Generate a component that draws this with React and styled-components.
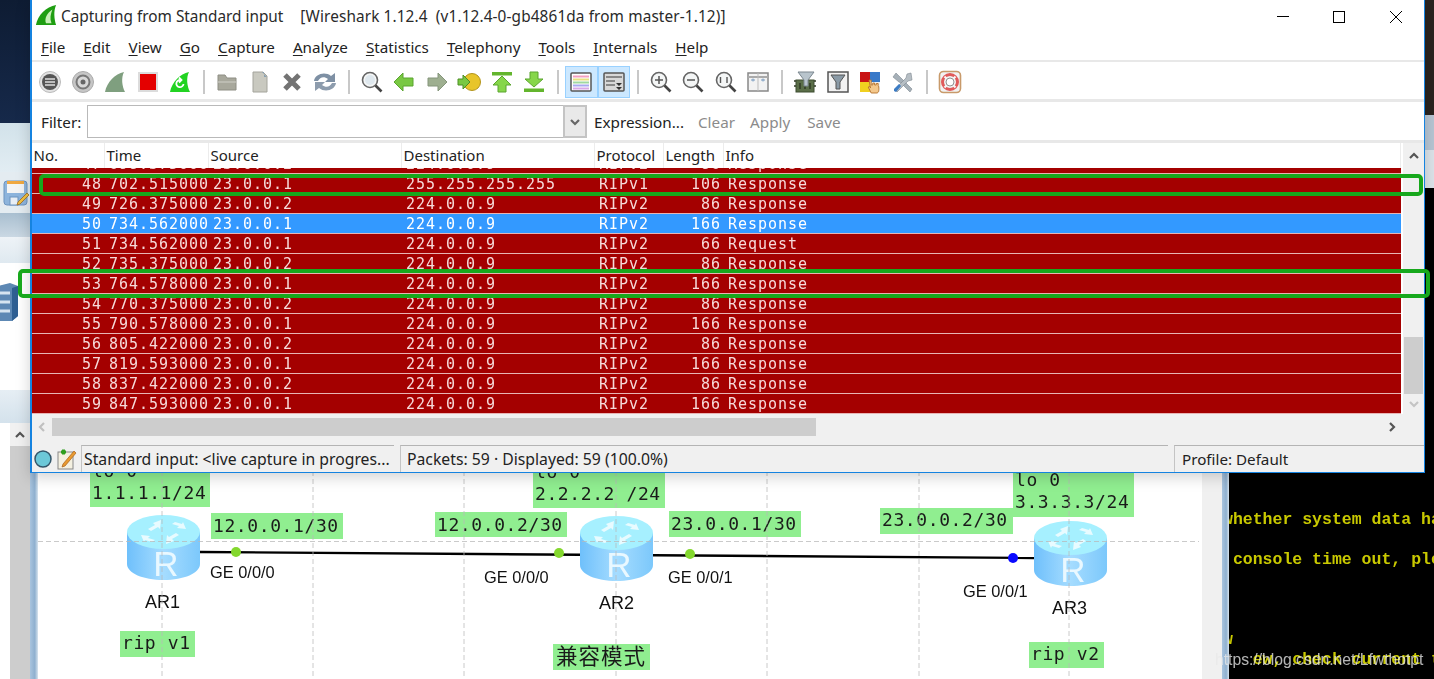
import styled, { createGlobalStyle } from "styled-components";

const GlobalStyle = createGlobalStyle`
  html, body {
    margin: 0;
    padding: 0;
    background: #fff;
  }
`;

const MONO = `"DejaVu Sans Mono", "Liberation Mono", monospace`;
const UI = `"Noto Sans", "Open Sans", sans-serif`;
const ARIAL = `"Liberation Sans", Arial, sans-serif`;

const Stage = styled.div`
  position: relative;
  width: 1434px;
  height: 679px;
  overflow: hidden;
`;

const Desktop = styled.div`
  display: grid;
  grid-template-columns: 10px 20px 8px 1164px 20px 7px 205px;
  grid-template-rows: 423px 256px;
  height: 679px;
`;

const Dock = styled.div`
  grid-column: 1 / 4;
  grid-row: 1;
  display: flex;
  flex-direction: column;
`;

const Band = styled.div`
  height: ${(p) => p.$h}px;
  flex: ${(p) => (p.$h ? "none" : 1)};
  box-sizing: border-box;
  display: flex;
  align-items: ${(p) => (p.$top ? "flex-start" : "center")};
  padding: ${(p) => p.$top || 0}px 0 0 ${(p) => p.$left || 0}px;
  background: ${(p) => p.$bg};
`;

const WallEdge = styled.div`
  grid-column: 4 / 8;
  grid-row: 1;
  display: flex;
  justify-content: flex-end;
  background: #000;
`;

const RightBands = styled.div`
  width: 10px;
  display: flex;
  flex-direction: column;
`;

const LeftGutter = styled.div`
  grid-column: 1;
  grid-row: 2;
  background: #fff;
`;

const SideScroll = styled.div`
  grid-column: 2;
  grid-row: 2;
  display: flex;
  flex-direction: column;
  background: #f1f1f1;
`;

const SideArrow = styled.div`
  height: 23px;
  display: flex;
  align-items: center;
  justify-content: center;
`;

const SideThumb = styled.div`
  flex: 1;
  background: #cdcdcd;
`;

const Splitter = styled.div`
  grid-column: ${(p) => p.$col};
  grid-row: 2;
  background: linear-gradient(90deg, #a9c4de, #8fb0cf 60%, #d8e4ee);
`;

const Canvas = styled.div`
  grid-column: 4;
  grid-row: 2;
  position: relative;
  background: #fff;
  overflow: hidden;
  filter: blur(0.35px);
`;

const Margin = styled.div`
  grid-column: 5;
  grid-row: 2;
  background: #f0f0f0;
`;

const Terminal = styled.div`
  grid-column: 7;
  grid-row: 2;
  background: #000;
  overflow: hidden;
  padding-top: 87px;
  color: #c9c900;
  font: bold 16.5px/20px "Liberation Mono", monospace;
  filter: blur(0.4px);
`;

const TermLine = styled.div`
  margin-left: -6px;
  height: 20px;
  white-space: pre;
`;

const Watermark = styled.div`
  position: absolute;
  left: 1215px;
  top: 650px;
  font: 15.7px/20px ${ARIAL};
  color: rgba(232, 232, 232, 0.78);
  white-space: nowrap;
  filter: blur(0.3px);
`;

const Tag = styled.div`
  position: absolute;
  left: ${(p) => p.$x - 38}px;
  top: ${(p) => p.$y - 423}px;
  width: ${(p) => p.$w}px;
  height: ${(p) => p.$h}px;
  padding-left: 2px;
  box-sizing: border-box;
  background: #90ee90;
  color: #1a1a1a;
  font: 18px/${(p) => p.$lh || 22}px ${MONO};
  letter-spacing: 0.6px;
  white-space: pre;
`;

const TwoLineTag = styled(Tag)`
  padding-top: 1px;
`;

const CjkTag = styled(Tag)`
  padding-left: 3px;
  font: 21.5px/22px "Noto Sans CJK SC", "Noto Sans", sans-serif;
  letter-spacing: 1px;
`;

const PortLabel = styled.div`
  position: absolute;
  left: ${(p) => p.$x - 38}px;
  top: ${(p) => p.$y - 423}px;
  font: 16.4px/20px ${ARIAL};
  color: #111;
  white-space: nowrap;
`;

const NodeLabel = styled(PortLabel)`
  font-size: 18px;
`;

const RouterBox = styled.div`
  position: absolute;
  left: ${(p) => p.$x - 38}px;
  top: ${(p) => p.$y - 423}px;
  width: 73px;
  height: 65px;
`;

const Drawing = styled.svg`
  position: absolute;
  left: 0;
  top: 0;
  width: 100%;
  height: 100%;
`;

const Window = styled.div`
  position: absolute;
  left: 30px;
  top: 0;
  width: 1395px;
  height: 473px;
  box-sizing: border-box;
  border: 1px solid #1583e0;
  border-width: 0 1px 1px 2px;
  background: #fff;
  display: flex;
  flex-direction: column;
  box-shadow: 0 4px 14px rgba(0, 0, 0, 0.18);
  color: #222;
  font-family: ${UI};
`;

const TitleBar = styled.div`
  height: 33px;
  display: flex;
  align-items: center;
  padding-left: 3px;
  font-size: 15.35px;
`;

const TitleIcon = styled.svg`
  width: 22px;
  height: 22px;
  margin: -3px 4px 0 0;
`;

const TitleText = styled.span`
  margin: -2px ${(p) => p.$gap}px 0 0;
  white-space: pre;
  color: #2a2a2a;
  letter-spacing: ${(p) => p.$track || 0}px;
`;

const WinButtons = styled.div`
  margin-left: auto;
  display: flex;
`;

const WinButton = styled.div`
  width: 56.5px;
  height: 33px;
  display: flex;
  align-items: center;
  justify-content: center;
`;

const MenuBar = styled.div`
  height: 27px;
  display: flex;
  align-items: center;
  gap: 18px;
  padding-left: 9px;
  border-bottom: 2px solid #e8e8e8;
  font-size: 15.2px;
  flex: none;
`;

const MenuItem = styled.span`
  color: #222;
`;

const Mnemonic = styled.span`
  text-decoration: underline;
  text-underline-offset: 2px;
`;

const Toolbar = styled.div`
  height: 34px;
  flex: none;
  display: flex;
  align-items: center;
  padding: 3px 0 0 2px;
  border-bottom: 3px solid #e8e8e8;
`;

const ToolButton = styled.div`
  width: 32.5px;
  height: 32px;
  box-sizing: border-box;
  flex: none;
  display: flex;
  align-items: center;
  justify-content: center;
  background: ${(p) => (p.$active ? "#cce8ff" : "transparent")};
  border: 1px solid ${(p) => (p.$active ? "#99d1ff" : "transparent")};
  filter: blur(0.3px);
`;

const ToolSep = styled.div`
  width: 2px;
  height: 24px;
  margin: 0 6px 0 6.5px;
  flex: none;
  background: #c8c8c8;
`;

const FilterBar = styled.div`
  height: 37px;
  flex: none;
  display: flex;
  align-items: center;
  padding: 1px 0 0 9px;
  border-bottom: 3px solid #e8e8e8;
  font-size: 15.25px;
`;

const FilterLabel = styled.span`
  width: 46px;
`;

const FilterInput = styled.div`
  width: 500px;
  height: 33px;
  box-sizing: border-box;
  display: flex;
  justify-content: flex-end;
  border: 1px solid #b9b9b9;
  border-right: none;
  background: #fff;
  margin-right: 7px;
`;

const FilterDrop = styled.div`
  width: 24px;
  display: flex;
  align-items: center;
  justify-content: center;
  background: #e9e9e9;
  border: 2px solid #c4c4c4;
  box-sizing: border-box;
  margin: -1px 0;
`;

const FilterAction = styled.span`
  color: ${(p) => (p.$dim ? "#8b8b8b" : "#222")};
  margin-right: ${(p) => p.$gap || 0}px;
`;

const ListArea = styled.div`
  height: 271px;
  flex: none;
  display: flex;
`;

const ListPane = styled.div`
  width: 1369px;
  flex: none;
  display: flex;
  flex-direction: column;
`;

const COLUMNS = "73px 104px 193px 193px 69px 60px 1fr";

const Header = styled.div`
  height: 25px;
  flex: none;
  display: grid;
  grid-template-columns: ${COLUMNS};
  align-items: center;
  font-size: 15px;
  line-height: 25px;
`;

const HeaderCell = styled.div`
  padding-left: 1.5px;
  height: 25px;
  box-shadow: inset -1px 0 #ececec;
  color: #222;
`;

const Rows = styled.div`
  height: 246px;
  overflow: hidden;
  background: #a40000;
  filter: blur(0.3px);
`;

const Row = styled.div`
  height: 20px;
  box-sizing: border-box;
  padding-top: 2px;
  display: grid;
  grid-template-columns: ${COLUMNS};
  align-items: center;
  margin-top: ${(p) => (p.$first ? -14 : 0)}px;
  background: ${(p) => (p.$selected ? "#3399ff" : "#a40000")};
  border-bottom: 1px solid #e8b4b4;
  color: ${(p) => (p.$selected ? "#fff" : "#f6d9d9")};
  font: 15px/17px ${MONO};
  letter-spacing: 0.97px;
  white-space: nowrap;
`;

const Cell = styled.div`
  padding: 0 3px 0 4px;
  text-align: ${(p) => (p.$right ? "right" : "left")};
`;

const VScroll = styled.div`
  flex: 1;
  margin-left: 2px;
  display: flex;
  flex-direction: column;
  align-items: center;
  background: #f0f0f0;
`;

const ScrollArrow = styled.div`
  height: ${(p) => p.$h || 26}px;
  display: flex;
  align-items: center;
  justify-content: center;
  flex: none;
`;

const VThumb = styled.div`
  width: 19px;
  height: 57px;
  margin-top: auto;
  background: #cdcdcd;
`;

const HScroll = styled.div`
  height: 31px;
  flex: none;
  display: flex;
  align-items: flex-start;
  background: #f0f0f0;
`;

const HArrow = styled.div`
  width: 20px;
  height: 26px;
  display: flex;
  align-items: center;
  justify-content: center;
`;

const HThumb = styled.div`
  width: 764px;
  height: 18px;
  margin-top: 4px;
  background: #cdcdcd;
`;

const HRight = styled(HArrow)`
  margin-left: auto;
  margin-right: 22px;
`;

const StatusBar = styled.div`
  height: 27px;
  flex: 1;
  display: flex;
  align-items: stretch;
  background: #f0f0f0;
  font-size: 15.75px;
`;

const StatusIcons = styled.div`
  width: 49px;
  flex: none;
  display: flex;
  align-items: center;
  gap: 5px;
  padding-left: 2px;
  box-sizing: border-box;
  filter: blur(0.3px);
`;

const StatusPanel = styled.div`
  width: ${(p) => (p.$w ? `${p.$w}px` : "auto")};
  flex: ${(p) => (p.$w ? "none" : 1)};
  box-sizing: border-box;
  margin-right: ${(p) => p.$gap || 0}px;
  padding-left: ${(p) => p.$pad || 2}px;
  border-top: 1px solid #b4b4b4;
  border-left: 1px solid #c4c4c4;
  line-height: 26px;
  white-space: nowrap;
  overflow: hidden;
  font-size: ${(p) => p.$size || "inherit"};
`;

const Marker = styled.div`
  position: absolute;
  left: ${(p) => p.$x}px;
  top: ${(p) => p.$y}px;
  width: ${(p) => p.$w}px;
  height: ${(p) => p.$h}px;
  box-sizing: border-box;
  border: 4px solid #17a81c;
  border-radius: 5px;
  filter: blur(0.3px);
`;

const Menus = ["File", "Edit", "View", "Go", "Capture", "Analyze", "Statistics", "Telephony", "Tools", "Internals", "Help"];

const packet = (no, time, src, dst, proto, len, info) => ({ no, time, src, dst, proto, len, info });

const Packets = [
  packet(47, "698.375000", "23.0.0.2", "224.0.0.9", "RIPv2", 86, "Response"),
  packet(48, "702.515000", "23.0.0.1", "255.255.255.255", "RIPv1", 106, "Response"),
  packet(49, "726.375000", "23.0.0.2", "224.0.0.9", "RIPv2", 86, "Response"),
  packet(50, "734.562000", "23.0.0.1", "224.0.0.9", "RIPv2", 166, "Response"),
  packet(51, "734.562000", "23.0.0.1", "224.0.0.9", "RIPv2", 66, "Request"),
  packet(52, "735.375000", "23.0.0.2", "224.0.0.9", "RIPv2", 86, "Response"),
  packet(53, "764.578000", "23.0.0.1", "224.0.0.9", "RIPv2", 166, "Response"),
  packet(54, "770.375000", "23.0.0.2", "224.0.0.9", "RIPv2", 86, "Response"),
  packet(55, "790.578000", "23.0.0.1", "224.0.0.9", "RIPv2", 166, "Response"),
  packet(56, "805.422000", "23.0.0.2", "224.0.0.9", "RIPv2", 86, "Response"),
  packet(57, "819.593000", "23.0.0.1", "224.0.0.9", "RIPv2", 166, "Response"),
  packet(58, "837.422000", "23.0.0.2", "224.0.0.9", "RIPv2", 86, "Response"),
  packet(59, "847.593000", "23.0.0.1", "224.0.0.9", "RIPv2", 166, "Response"),
];

const Chevron = ({ dir = "up", color = "#555", size = 12 }) => {
  const points = {
    up: "2,8 6,4 10,8",
    down: "2,4 6,8 10,4",
    left: "8,2 4,6 8,10",
    right: "4,2 8,6 4,10",
  };
  return (
    <svg width={size} height={size} viewBox="0 0 12 12">
      <polyline points={points[dir]} fill="none" stroke={color} strokeWidth="2.2" />
    </svg>
  );
};

const Fin = ({ fill, swirl }) => (
  <>
    <path d="M2 22C4 12 12 4 21 2c-3 6-2 14 1 20z" fill={fill} />
    <path d={swirl} fill="none" stroke="#fff" strokeWidth="1.8" />
  </>
);

const Lens = ({ children }) => (
  <>
    <circle cx="10" cy="10" r="7.5" fill="#f4f6f6" stroke="#666" strokeWidth="1.6" />
    <path d="M15.5 15.5l6 6" stroke="#444" strokeWidth="2.6" />
    {children}
  </>
);

const Icons = {
  interfaces: (
    <>
      <circle cx="12" cy="12" r="10.5" fill="#e2e2e2" stroke="#bbb" />
      <circle cx="12" cy="12" r="8" fill="#555" />
      <path d="M7 9h10M7 12h10M7 15h10" stroke="#ddd" strokeWidth="1.4" />
    </>
  ),
  options: (
    <>
      <circle cx="12" cy="12" r="10.5" fill="#c6c6c6" stroke="#aaa" />
      <circle cx="12" cy="12" r="6.5" fill="#d8d8d8" stroke="#777" strokeWidth="2" />
      <circle cx="12" cy="12" r="2.5" fill="#666" />
    </>
  ),
  start: <Fin fill="#7f9f7f" swirl="" />,
  stop: (
    <>
      <rect x="2" y="2" width="20" height="20" fill="#dcdcdc" />
      <rect x="4" y="4" width="16" height="16" fill="#e40000" />
    </>
  ),
  restart: <Fin fill="#22d322" swirl="M15.5 14a3.6 3.6 0 1 1-3-4M11 7.5l2.5 2.5-2.5 2.5" />,
  open: (
    <>
      <path d="M3 5h7l2 3h9v12H3z" fill="#a8a89c" stroke="#8e8e84" />
      <path d="M3 12h18" stroke="#d0d0c8" />
    </>
  ),
  save: (
    <>
      <path d="M5 2h10l4 4v16H5z" fill="#c9c9c0" stroke="#a4a49c" />
      <path d="M14 2h2v5h3" fill="#8aa0b0" />
    </>
  ),
  close: <path d="M5 5l14 14M19 5L5 19" stroke="#737373" strokeWidth="5" />,
  reload: (
    <>
      <path d="M1 11C2 4 12 1 18 6l4-3v9H12l3-3c-4-3-8-2-10 2z" fill="#7e90a4" />
      <path d="M23 13c-1 7-11 10-17 5l-4 3v-9h10l-3 3c4 3 8 2 10-2z" fill="#8d9cad" />
    </>
  ),
  find: <Lens><circle cx="10" cy="10" r="5" fill="#dfe8ee" /></Lens>,
  back: <path d="M2 12l9-9v5h10v8H11v5z" fill="#79c843" stroke="#5aa52e" />,
  forward: <path d="M22 12l-9-9v5H3v8h10v5z" fill="#9eaf90" stroke="#84957a" />,
  goto: (
    <>
      <circle cx="15" cy="12" r="8.5" fill="#e8c52a" stroke="#b3941b" />
      <path d="M13 12L6 5v4H1v6h5v4z" fill="#79c843" stroke="#4c8f25" />
    </>
  ),
  top: (
    <>
      <rect x="2" y="2" width="20" height="3.5" fill="#63b52d" />
      <path d="M12 6l9 9h-5v7H8v-7H3z" fill="#86d64a" stroke="#5aa52e" />
    </>
  ),
  bottom: (
    <>
      <path d="M12 17l9-8h-5V2H8v7H3z" fill="#86d64a" stroke="#5aa52e" />
      <rect x="2" y="18.5" width="20" height="3.5" fill="#63b52d" />
    </>
  ),
  colorize: (
    <>
      <rect x="2" y="3" width="20" height="18" rx="1" fill="#fff" stroke="#555" strokeWidth="1.5" />
      <path d="M4 6.5h16" stroke="#f3a0c0" strokeWidth="2" />
      <path d="M4 9.5h16" stroke="#e8e080" strokeWidth="2" />
      <path d="M4 12.5h16" stroke="#a0d8a0" strokeWidth="2" />
      <path d="M4 15.5h16" stroke="#a8a8f0" strokeWidth="2" />
      <path d="M4 18.5h16" stroke="#d8a8e8" strokeWidth="2" />
    </>
  ),
  autoscroll: (
    <>
      <rect x="2" y="3" width="20" height="18" rx="1" fill="#d8d8d8" stroke="#555" strokeWidth="1.5" />
      <path d="M4 7h16M4 11h9M4 15h9" stroke="#888" strokeWidth="2" />
      <path d="M14 13h6l-3 3zM14 17h6l-3 3z" fill="#333" />
    </>
  ),
  zoomIn: <Lens><path d="M6 10h8M10 6v8" stroke="#555" strokeWidth="1.5" /></Lens>,
  zoomOut: <Lens><path d="M6 10h8" stroke="#555" strokeWidth="1.5" /></Lens>,
  zoomFit: <Lens><path d="M6.5 7v6M10 8.5v.1M10 11.5v.1M13 7v6" stroke="#555" strokeWidth="1.4" /></Lens>,
  resize: (
    <>
      <rect x="2" y="3" width="20" height="18" fill="#f2f2f2" stroke="#888" strokeWidth="1.5" />
      <path d="M2 7h20" stroke="#aaa" strokeWidth="2" />
      <path d="M12 3v18" stroke="#bbb" />
      <path d="M5 10h4M7 8.5v3M15 10h4M17 8.5v3" stroke="#7a9cc0" />
    </>
  ),
  capFilter: (
    <>
      <rect x="3" y="10" width="18" height="12" fill="#5a6e48" stroke="#3d4c30" />
      <path d="M1 11h2M21 11h2M1 16h2M21 16h2M7 13v6M12 13v6M17 13v6" stroke="#2f3a24" strokeWidth="1.5" />
      <path d="M5 2h16l-6 8v6h-4v-6z" fill="#b8c4cc" stroke="#7a868e" />
    </>
  ),
  dispFilter: (
    <>
      <rect x="2" y="2" width="20" height="20" fill="#f2f2f2" stroke="#555" strokeWidth="1.5" />
      <path d="M5 5h14l-5 7v7h-4v-7z" fill="#8a9aa6" stroke="#555" />
    </>
  ),
  coloring: (
    <>
      <rect x="2" y="2" width="10" height="10" fill="#c81414" />
      <rect x="12" y="2" width="10" height="10" fill="#3878c8" />
      <rect x="2" y="12" width="10" height="10" fill="#f0d020" />
      <rect x="12" y="12" width="10" height="10" fill="#f0f0f0" />
      <path d="M11 10h2.2v5h1.6v-2h1.8v2h1.6v-1.5h2v2c1 1 1 7-1 7.5h-6l-3-6 1.5-.5.8 1.5z" fill="#f4c88c" stroke="#b5722a" strokeWidth=".9" />
    </>
  ),
  tools: (
    <>
      <path d="M5 3l5 5 2 2 9 9-2 3-9-9-2-1-6-5z" fill="#a6b0b8" stroke="#7d8890" strokeWidth=".6" />
      <path d="M20 3l-4 1-1 4-11 11 2 3 11-11 4-1z" fill="#b6bec4" stroke="#7d8890" strokeWidth=".6" />
      <path d="M3 19l5-5 2 2-5 6-2-1z" fill="#3c7cc4" />
    </>
  ),
  help: (
    <>
      <rect x="1.5" y="1.5" width="21" height="21" rx="4" fill="#f2f2f2" stroke="#c89a6a" strokeWidth="1.6" />
      <circle cx="12" cy="12" r="7.5" fill="none" stroke="#e05a5a" strokeWidth="3" />
      <circle cx="12" cy="12" r="4" fill="#fff" stroke="#777" strokeWidth=".8" />
      <path d="M6.5 6.5l2 2M17.5 6.5l-2 2M6.5 17.5l2-2M17.5 17.5l-2-2" stroke="#f5f5f5" strokeWidth="2.2" />
    </>
  ),
};

const ToolGroups = [
  [["interfaces"], ["options"], ["start"], ["stop"], ["restart"]],
  [["open"], ["save"], ["close"], ["reload"]],
  [["find"], ["back"], ["forward"], ["goto"], ["top"], ["bottom"]],
  [["colorize", true], ["autoscroll", true]],
  [["zoomIn"], ["zoomOut"], ["zoomFit"], ["resize"]],
  [["capFilter"], ["dispFilter"], ["coloring"], ["tools"]],
  [["help"]],
];

const ToolGroup = ({ group, last }) => (
  <>
    {group.map(([name, active]) => (
      <ToolButton key={name} $active={active}>
        <svg width="24" height="24" viewBox="0 0 24 24">{Icons[name]}</svg>
      </ToolButton>
    ))}
    {!last && <ToolSep />}
  </>
);

const RouterIcon = ({ id }) => (
  <svg width="73" height="65" viewBox="0 0 73 65">
    <defs>
      <linearGradient id={`body${id}`} x1="0" y1="0" x2="1" y2="0">
        <stop offset="0" stopColor="#6fc0fb" />
        <stop offset="0.5" stopColor="#a5dcff" />
        <stop offset="1" stopColor="#7cc8fb" />
      </linearGradient>
    </defs>
    <path d="M0 17v32c0 9 16 16 36.5 16S73 58 73 49V17z" fill={`url(#body${id})`} />
    <ellipse cx="36.5" cy="17" rx="36.5" ry="17" fill="#a6f0ff" />
    <path d="M34 5l-8 3 2 2-7 4 3 2 7-4 2 2zM39 29l8-3-2-2 7-4-3-2-7 4-2-2zM14 20l9 1-2 2 7 2-3 2-7-2-1 2zM59 14l-9-1 2-2-7-2 3-2 7 2 1-2z" fill="#e8fbff" />
    <text x="39" y="61" textAnchor="middle" fontFamily="Liberation Sans, sans-serif" fontSize="35" fill="#e9f8ff">R</text>
  </svg>
);

const Dot = ({ x, y, color = "#84d82e" }) => <circle cx={x - 38} cy={y - 423} r="5" fill={color} />;

const gridXs = [162, 313, 464, 616, 767, 919, 1069];

const Topology = () => (
  <Canvas>
    <TwoLineTag $x={90} $y={459} $w={120} $h={48}>{"lo 0\n1.1.1.1/24"}</TwoLineTag>
    <Tag $x={211} $y={513} $w={132} $h={26} $lh={26}>12.0.0.1/30</Tag>
    <Tag $x={435} $y={512} $w={132} $h={25} $lh={25}>12.0.0.2/30</Tag>
    <TwoLineTag $x={533} $y={460} $w={132} $h={48}>{"lo 0\n2.2.2.2 /24"}</TwoLineTag>
    <Tag $x={669} $y={511} $w={132} $h={26} $lh={26}>23.0.0.1/30</Tag>
    <Tag $x={880} $y={508} $w={133} $h={26} $lh={24}>23.0.0.2/30</Tag>
    <Tag $x={1013} $y={469} $w={121} $h={48}>{"lo 0\n3.3.3.3/24"}</Tag>
    <Tag $x={120} $y={631} $w={75} $h={26} $lh={24}>rip v1</Tag>
    <CjkTag $x={553} $y={644} $w={97} $h={26}>兼容模式</CjkTag>
    <Tag $x={1029} $y={642} $w={75} $h={26} $lh={24}>rip v2</Tag>
    <Drawing>
      <path d="M162 129L997 135" stroke="#000" strokeWidth="2.4" />
      <Dot x={236} y={552} />
      <Dot x={559} y={553} />
      <Dot x={690} y={554} />
      <Dot x={1013} y={558} color="#0a0aff" />
    </Drawing>
    <RouterBox $x={127} $y={515}><RouterIcon id="a" /></RouterBox>
    <RouterBox $x={580} $y={516}><RouterIcon id="b" /></RouterBox>
    <RouterBox $x={1034} $y={521}><RouterIcon id="c" /></RouterBox>
    <PortLabel $x={210} $y={562}>GE 0/0/0</PortLabel>
    <PortLabel $x={484} $y={567}>GE 0/0/0</PortLabel>
    <PortLabel $x={668} $y={567}>GE 0/0/1</PortLabel>
    <PortLabel $x={963} $y={581}>GE 0/0/1</PortLabel>
    <NodeLabel $x={145} $y={592}>AR1</NodeLabel>
    <NodeLabel $x={599} $y={593}>AR2</NodeLabel>
    <NodeLabel $x={1052} $y={598}>AR3</NodeLabel>
    <Drawing>
      {gridXs.map((x) => (
        <path key={x} d={`M${x - 38} 0V256`} stroke="#b8b8b8" strokeOpacity="0.75" strokeDasharray="5 3" />
      ))}
      <path d="M0 118.5H1161" stroke="#b8b8b8" strokeOpacity="0.75" strokeDasharray="5 3" />
    </Drawing>
  </Canvas>
);

const FloppyIcon = () => (
  <svg width="26" height="26" viewBox="0 0 26 26">
    <rect x="1" y="1" width="23" height="24" rx="3" fill="#8db4dc" stroke="#6d94bf" />
    <rect x="4" y="1" width="17" height="3" fill="#f0a840" />
    <rect x="4" y="4" width="17" height="9" fill="#f4f4f4" />
    <rect x="7" y="17" width="8" height="8" fill="#e8eef4" stroke="#6d94bf" />
    <path d="M15 22l9-9 2 2-9 9-3 1z" fill="#f0c040" stroke="#a06a20" strokeWidth=".8" />
  </svg>
);

const ServerIcon = () => (
  <svg width="18" height="38" viewBox="0 0 18 38">
    <path d="M-6 4L10 0l8 3v30l-6 5H-6z" fill="#5d88b4" />
    <path d="M12 5l6-2v30l-6 5z" fill="#2f5f92" />
    <path d="M0 10h10M0 19h10M0 28h10" stroke="#d6e4f0" strokeWidth="3" />
  </svg>
);

const App = () => (
  <Stage>
    <GlobalStyle />
    <Desktop>
      <Dock>
        <Band $h={123} $bg="linear-gradient(180deg, #0e1c33, #16294a)" />
        <Band $h={49} $bg="linear-gradient(180deg, #d2e2ea, #e2edf3)" />
        <Band $h={41} $bg="#e4ecf1" $left={3}><FloppyIcon /></Band>
        <Band $h={24} $bg="linear-gradient(180deg, #a9bfd0, #cad8e3)" />
        <Band $h={26} $bg="linear-gradient(180deg, #eef3f7, #dfe9f0)" />
        <Band $h={127} $bg="#fff" $top={20}><ServerIcon /></Band>
        <Band $bg="linear-gradient(180deg, #e6eef4, #d4e2ec)" />
      </Dock>
      <WallEdge>
        <RightBands>
          <Band $h={115} $bg="#2a2420" />
          <Band $h={35} $bg="#b8c6d4" />
          <Band $h={38} $bg="#dde4ea" />
        </RightBands>
      </WallEdge>
      <LeftGutter />
      <SideScroll>
        <SideArrow><Chevron /></SideArrow>
        <SideThumb />
      </SideScroll>
      <Splitter $col={3} />
      <Topology />
      <Margin />
      <Splitter $col={6} />
      <Terminal>
        <TermLine>whether system data has</TermLine>
        <TermLine />
        <TermLine> console time out, please</TermLine>
        <TermLine />
        <TermLine />
        <TermLine />
        <TermLine>w</TermLine>
        <TermLine>   ew, check current time</TermLine>
      </Terminal>
    </Desktop>

    <Window>
      <TitleBar>
        <TitleIcon viewBox="0 0 24 24">
          <path d="M1 23C3 12 12 3 23 1c-3 7-2 15 0 22z" fill="#1f9e12" />
          <path d="M12 21c-2-5 1-11 7-15-2 5-3 10-1 15z" fill="#c8f0b8" />
        </TitleIcon>
        <TitleText $gap={17}>Capturing from Standard input</TitleText>
        <TitleText $gap={0} $track={0.12}>[Wireshark 1.12.4  (v1.12.4-0-gb4861da from master-1.12)]</TitleText>
        <WinButtons>
          <WinButton>
            <svg width="12" height="12" viewBox="0 0 12 12"><path d="M0 5.5H12" stroke="#000" /></svg>
          </WinButton>
          <WinButton>
            <svg width="12" height="12" viewBox="0 0 12 12"><rect x=".5" y=".5" width="11" height="11" fill="none" stroke="#000" /></svg>
          </WinButton>
          <WinButton>
            <svg width="12" height="12" viewBox="0 0 12 12"><path d="M0 0L12 12M12 0L0 12" stroke="#000" /></svg>
          </WinButton>
        </WinButtons>
      </TitleBar>

      <MenuBar>
        {Menus.map((m) => (
          <MenuItem key={m}>
            <Mnemonic>{m[0]}</Mnemonic>
            {m.slice(1)}
          </MenuItem>
        ))}
      </MenuBar>

      <Toolbar>
        {ToolGroups.map((group, i) => (
          <ToolGroup key={i} group={group} last={i === ToolGroups.length - 1} />
        ))}
      </Toolbar>

      <FilterBar>
        <FilterLabel>Filter:</FilterLabel>
        <FilterInput>
          <FilterDrop><Chevron dir="down" color="#666" /></FilterDrop>
        </FilterInput>
        <FilterAction $gap={14}>Expression...</FilterAction>
        <FilterAction $dim $gap={15}>Clear</FilterAction>
        <FilterAction $dim $gap={17}>Apply</FilterAction>
        <FilterAction $dim>Save</FilterAction>
      </FilterBar>

      <ListArea>
        <ListPane>
          <Header>
            {["No.", "Time", "Source", "Destination", "Protocol", "Length", "Info"].map((h) => (
              <HeaderCell key={h}>{h}</HeaderCell>
            ))}
          </Header>
          <Rows>
            {Packets.map((p, i) => (
              <Row key={p.no} $first={i === 0} $selected={p.no === 50}>
                <Cell $right>{p.no}</Cell>
                <Cell>{p.time}</Cell>
                <Cell>{p.src}</Cell>
                <Cell>{p.dst}</Cell>
                <Cell>{p.proto}</Cell>
                <Cell $right>{p.len}</Cell>
                <Cell>{p.info}</Cell>
              </Row>
            ))}
          </Rows>
        </ListPane>
        <VScroll>
          <ScrollArrow><Chevron color="#555" /></ScrollArrow>
          <VThumb />
          <ScrollArrow $h={20}><Chevron dir="down" color="#c4c4c4" /></ScrollArrow>
        </VScroll>
      </ListArea>

      <HScroll>
        <HArrow><Chevron dir="left" color="#c0c0c0" /></HArrow>
        <HThumb />
        <HRight><Chevron dir="right" color="#555" /></HRight>
      </HScroll>

      <StatusBar>
        <StatusIcons>
          <svg width="18" height="18" viewBox="0 0 18 18">
            <circle cx="9" cy="9" r="8" fill="#6cc8d8" stroke="#33566a" strokeWidth="1.5" />
          </svg>
          <svg width="20" height="22" viewBox="0 0 20 22">
            <rect x="1" y="4" width="15" height="17" fill="#f4f0e0" stroke="#888" />
            <path d="M4 4h5M6.5 1.5v5" stroke="#2f9e1e" strokeWidth="3" />
            <path d="M6 16L17 3l2 2L8 18l-3 1z" fill="#e89a30" stroke="#a8601a" strokeWidth=".7" />
          </svg>
        </StatusIcons>
        <StatusPanel $w={313} $gap={6}>Standard input: &lt;live capture in progres...</StatusPanel>
        <StatusPanel $w={768} $gap={6} $pad={6}>Packets: 59 · Displayed: 59 (100.0%)</StatusPanel>
        <StatusPanel $pad={7} $size="15.2px">Profile: Default</StatusPanel>
      </StatusBar>
    </Window>

    <Marker $x={39} $y={174} $w={1384} $h={22} />
    <Marker $x={18} $y={269} $w={1412} $h={29} />
    <Watermark>https://blog.csdn.net/Lfwthotpt</Watermark>
  </Stage>
);

export default App;
